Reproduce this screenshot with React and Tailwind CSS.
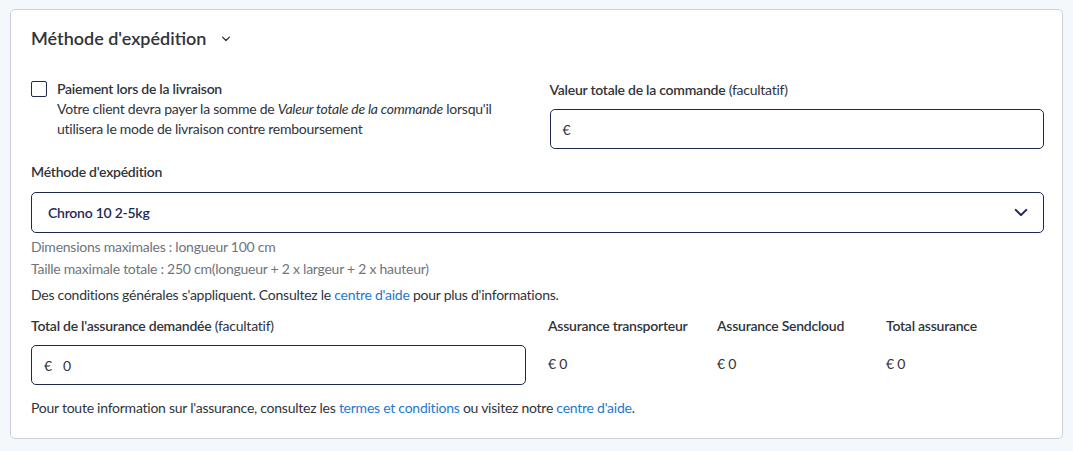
import React from "react";

const font = { fontFamily: "Lato, 'Noto Sans', sans-serif" };

const Chevron = ({ className }) => (
  <svg viewBox="0 0 16 10" fill="none" className={className}>
    <path d="M2 2l6 6 6-6" stroke="currentColor" strokeWidth="2.4" strokeLinecap="round" strokeLinejoin="round" />
  </svg>
);

const App = () => {
  return (
    <div style={font} className="min-h-screen w-[1073px] bg-[#f4f7fc] pl-[10px] pr-[10px] pt-[9px] text-[14px] tracking-[-0.25px] text-[#30343b]">
      <section className="rounded-[5px] border border-[#cdd1d7] bg-white pl-[20px] pr-[18px] pt-[15px] pb-[19px]">
        <header className="flex h-[26px] items-center gap-[15px]">
          <h2 className="text-[18px] font-semibold tracking-normal text-[#30343b]">Méthode d'expédition</h2>
          <svg viewBox="0 0 12 8" fill="none" className="mt-[2px] h-[6px] w-[10px] text-[#30343b]">
            <path d="M1.5 1.5L6 6l4.5-4.5" stroke="currentColor" strokeWidth="1.8" strokeLinecap="round" strokeLinejoin="round" />
          </svg>
        </header>

        <div className="mt-[28px] grid grid-cols-2 gap-[24px]">
          <label className="flex items-start gap-[10px]">
            <span className="mt-[2px] block size-[16px] shrink-0 rounded-[2px] border-[1.5px] border-[#1b2a4e] bg-white" />
            <span className="block leading-[20px]">
              <span className="block font-semibold">Paiement lors de la livraison</span>
              <span className="block">
                Votre client devra payer la somme de <em>Valeur totale de la commande</em> lorsqu'il utilisera le mode de
                livraison contre remboursement
              </span>
            </span>
          </label>

          <div className="pt-[1px]">
            <p className="leading-[20px]">
              <span className="font-semibold">Valeur totale de la commande</span> (facultatif)
            </p>
            <div className="mt-[9px] flex h-[40px] items-center rounded-[5px] border border-[#1b2a4e] px-[12px]">
              <span>€</span>
            </div>
          </div>
        </div>

        <p className="mt-[13px] font-semibold leading-[20px]">Méthode d'expédition</p>
        <div className="mt-[10px] flex h-[41px] items-center justify-between rounded-[5px] border border-[#1b2a4e] pl-[16px] pr-[15px]">
          <span className="font-semibold text-[#1c2a58]">Chrono 10 2-5kg</span>
          <Chevron className="h-[9px] w-[14px] text-[#1c2a58]" />
        </div>

        <p className="mt-[3px] leading-[22px] text-[#6f747b]">Dimensions maximales : longueur 100 cm</p>
        <p className="leading-[22px] text-[#6f747b]">Taille maximale totale : 250 cm(longueur + 2 x largeur + 2 x hauteur)</p>
        <p className="mt-[4px] leading-[22px]">
          Des conditions générales s'appliquent. Consultez le <a className="text-[#1f78d1]">centre d'aide</a> pour plus
          d'informations.
        </p>

        <div className="mt-[10px] flex">
          <div className="w-[495px] shrink-0">
            <p className="leading-[20px]">
              <span className="font-semibold">Total de l'assurance demandée</span> (facultatif)
            </p>
            <div className="mt-[9px] flex h-[40px] items-center gap-[11px] rounded-[5px] border border-[#1b2a4e] px-[12px]">
              <span>€</span>
              <span>0</span>
            </div>
          </div>
          <div className="ml-[22px] flex">
            {["Assurance transporteur", "Assurance Sendcloud", "Total assurance"].map((t) => (
              <div key={t} className="w-[169px]">
                <p className="font-semibold leading-[20px]">{t}</p>
                <p className="mt-[18px] leading-[20px]">€ 0</p>
              </div>
            ))}
          </div>
        </div>

        <p className="mt-[12px] leading-[22px]">
          Pour toute information sur l'assurance, consultez les <a className="text-[#1f78d1]">termes et conditions</a> ou
          visitez notre <a className="text-[#1f78d1]">centre d'aide</a>.
        </p>
      </section>
    </div>
  );
};

export default App;
